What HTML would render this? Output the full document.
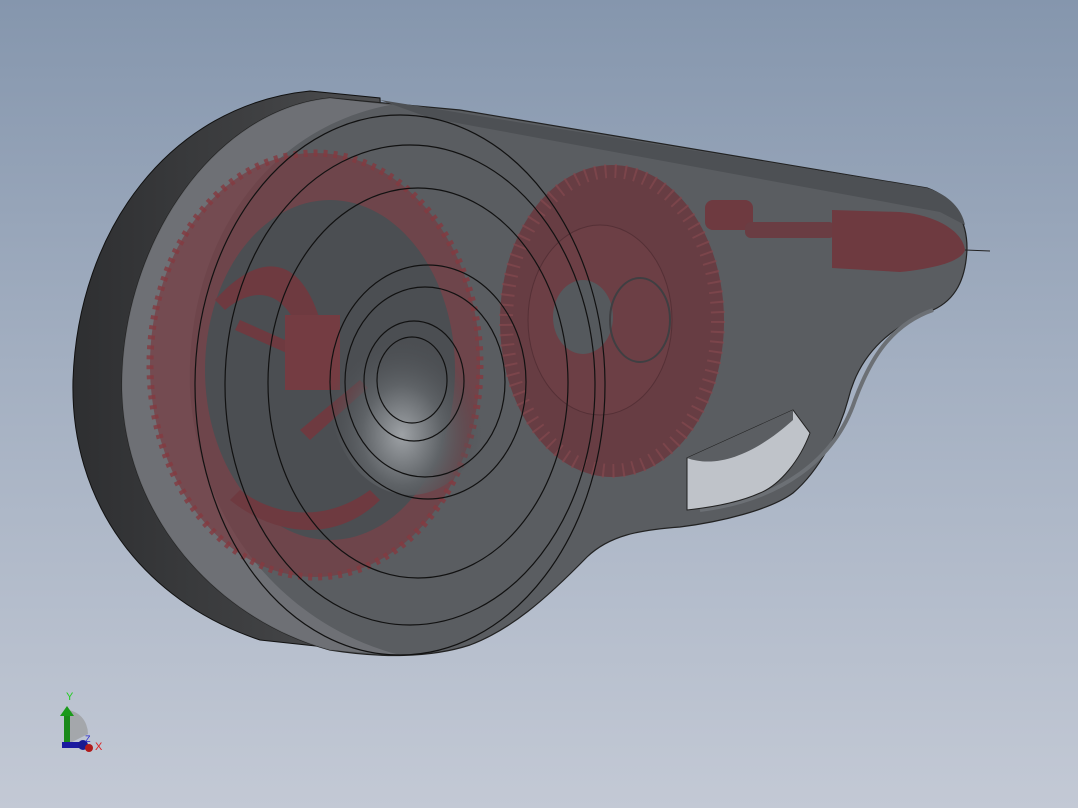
<!DOCTYPE html>
<html><head><meta charset="utf-8"><style>
html,body{margin:0;padding:0;}
body{width:1078px;height:808px;overflow:hidden;background:linear-gradient(180deg,#8596ad 0%,#a3afc1 45%,#c3c9d5 100%);font-family:"Liberation Sans",sans-serif;}
svg{position:absolute;left:0;top:0;}
</style></head><body>
<svg width="1078" height="808" viewBox="0 0 1078 808">
<defs>
<linearGradient id="rim" x1="0" y1="0" x2="1" y2="0">
<stop offset="0" stop-color="#2e2f31"/><stop offset="0.6" stop-color="#404143"/><stop offset="1" stop-color="#505153"/>
</linearGradient>
<radialGradient id="hub" cx="0.45" cy="0.7" r="0.5">
<stop offset="0" stop-color="#9ea2a6"/><stop offset="0.5" stop-color="#5f6367"/><stop offset="1" stop-color="#4a4d51" stop-opacity="0"/>
</radialGradient>
</defs>
<path d="M310 91 L380 98 L400 655 L260 640 C140 600 70 500 73 380 C78 230 170 105 310 91 Z" fill="url(#rim)" stroke="#111" stroke-width="1"/>
<path d="M330 98 L460 110 L927 188 C955 198 967 222 967 248 C966 280 955 300 933 310 C895 325 860 350 848 400 C840 430 820 470 793 493 C770 510 720 522 680 527 C640 530 610 535 587 557 C545 600 510 630 470 645 C430 658 380 658 330 650 C220 620 125 520 122 390 C120 250 210 110 330 98 Z" fill="#5a5d61" stroke="#222" stroke-width="1.2"/>
<path d="M330 98 C210 110 120 250 122 390 C125 520 220 620 330 650 L400 655 C300 630 200 540 190 390 C185 250 260 130 390 105 Z" fill="#73767b" fill-opacity="0.8"/>
<path d="M380 100 L927 188 C950 195 962 210 965 225 L940 212 L430 118 Z" fill="#4d5054"/>
<ellipse cx="315" cy="365" rx="165" ry="212" fill="#763c42" fill-opacity="0.7"/>
<ellipse cx="315" cy="365" rx="165" ry="212" fill="none" stroke="#853a40" stroke-width="7" stroke-dasharray="4 6" stroke-opacity="0.8"/>
<ellipse cx="330" cy="370" rx="125" ry="170" fill="#4b4e52"/>
<path d="M215 300 C260 250 300 255 320 320 L300 335 C285 290 255 285 225 310 Z" fill="#6e3a40"/>
<path d="M230 500 C280 540 340 540 380 500 L370 490 C330 520 280 520 240 490 Z" fill="#6e3a40"/>
<path d="M240 320 L330 360 L325 370 L235 330 Z" fill="#6e3a40"/>
<path d="M300 430 L360 380 L368 388 L310 440 Z" fill="#6e3a40"/>
<rect x="285" y="315" width="55" height="75" fill="#743c42"/>
<ellipse cx="612" cy="321" rx="112" ry="156" fill="#673d43"/>
<ellipse cx="612" cy="321" rx="106" ry="150" fill="none" stroke="#84484f" stroke-width="14" stroke-dasharray="2 8" stroke-opacity="0.7"/>
<ellipse cx="600" cy="320" rx="72" ry="95" fill="#6c3f45" stroke="#553036"/>
<ellipse cx="583" cy="317" rx="30" ry="37" fill="#55595d"/>
<ellipse cx="640" cy="320" rx="30" ry="42" fill="none" stroke="#3f3f42" stroke-width="2"/>
<rect x="705" y="200" width="48" height="30" rx="8" fill="#6e3a40"/>
<rect x="745" y="222" width="90" height="16" rx="6" fill="#6a3d43"/>
<path d="M832 210 L900 212 C935 215 962 230 965 250 C962 260 940 268 900 272 L832 268 Z" fill="#6e3a40"/>
<line x1="965" y1="250" x2="990" y2="251" stroke="#222" stroke-width="1"/>
<path d="M933 310 C890 325 870 360 855 400 C835 460 780 500 700 510" fill="none" stroke="#6c7075" stroke-width="4"/>
<path d="M687 458 L793 410 L810 433 C800 460 780 485 760 493 C740 502 715 507 687 510 Z" fill="#bfc3c9" stroke="#222" stroke-width="1"/>
<path d="M687 458 C720 470 760 450 793 420 L793 410 Z" fill="#5b5e62"/>
<ellipse cx="410" cy="395" rx="80" ry="100" fill="url(#hub)"/>
<g fill="none" stroke="#111" stroke-width="1.2">
<ellipse cx="412" cy="380" rx="35" ry="43"/>
<ellipse cx="414" cy="381" rx="50" ry="60"/>
<ellipse cx="425" cy="382" rx="80" ry="95"/>
<ellipse cx="428" cy="382" rx="98" ry="117"/>
<ellipse cx="418" cy="383" rx="150" ry="195"/>
<ellipse cx="410" cy="385" rx="185" ry="240"/>
<ellipse cx="400" cy="385" rx="205" ry="270"/>
</g>
<g>
<path d="M88 734 A22 24 0 0 0 66 710 L66 745 Z" fill="#a4a7ab"/>
<rect x="64" y="715" width="6" height="30" fill="#1a8a1a"/>
<polygon points="60,716 67,706 74,716" fill="#1a9a1a"/>
<rect x="62" y="742" width="24" height="6" fill="#1a1aa0"/>
<circle cx="83" cy="745" r="5" fill="#1a1a90"/>
<circle cx="89" cy="748" r="4" fill="#b01a1a"/>
<text x="66" y="700" font-size="11" fill="#22cc22">Y</text>
<text x="95" y="750" font-size="11" fill="#dd2222">X</text>
<text x="85" y="742" font-size="9" fill="#2222cc">Z</text>
</g>
</svg>
</body></html>
